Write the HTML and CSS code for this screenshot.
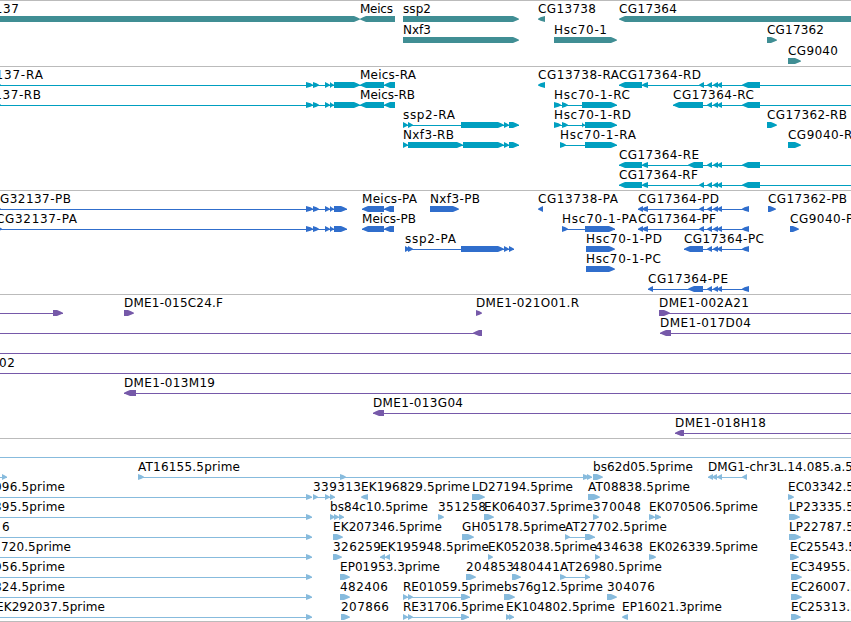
FILE: index.html
```
<!DOCTYPE html>
<html lang="en">

<head>
    <meta charset="UTF-8">
    <title>Genome Tracks</title>
    <meta name="viewport" content="width=device-width, initial-scale=1.0">
    <link rel="stylesheet" href="styles.css">
</head>

<body>

    <main class="tracks">
        <svg class="track genes" id="genes"></svg>
        <svg class="track transcripts" id="transcripts"></svg>
        <svg class="track proteins" id="proteins"></svg>
        <svg class="track bacs" id="bacs"></svg>
        <svg class="track ests" id="ests"></svg>
    </main>

    <script src="script.js"></script>

</body>

</html>
```
FILE: styles.css
```
body {
    margin: 0;
    background: #fff;
    overflow: hidden;
}

.tracks {
    display: flex;
    flex-direction: column;
    border-bottom: 1px solid #bbb;
}

.track {
    display: block;
    box-sizing: border-box;
    width: 100%;
    border-top: 1px solid #bbb;
    overflow: hidden;
}

.genes {
    height: 66px;
    fill: #408e94;
}

.transcripts {
    height: 124px;
    fill: #009fc0;
}

.proteins {
    height: 104px;
    fill: #306ecc;
}

.bacs {
    height: 144px;
    fill: #7659a9;
}

.ests {
    height: 183px;
    fill: #87bbdd;
}

.label {
    font-family: "DejaVu Sans", sans-serif;
    font-size: 12px;
    fill: #000;
}
```
FILE: script.js
```
const SVG_NS = 'http://www.w3.org/2000/svg';

// runs past the right edge of the view
const OUT = 900;

// exons shared by several CG17364 and Meics/CG32137 models
const tail = [[707, 712], [713, 718], [717, 722]];
const left = [[306, 313], [313, 319], [325, 330], [330, 334]];

// feature: [row, strand, label, label start, label end, blocks, line start, line end]
const tracks = {
    genes: {
        first: 18, step: 21,
        features: [
            [0, '+', 'CG32137', -41, 19, [[-40, 360]]],
            [0, '-', 'Meics', 360, 393, [[360, 395]]],
            [0, '+', 'ssp2', 403, 431, [[403, 519]]],
            [1, '+', 'Nxf3', 403, 431, [[403, 519]]],
            [0, '-', 'CG13738', 538, 596, [[538, 545]]],
            [1, '+', 'Hsc70-1', 554, 607, [[554, 617]]],
            [0, '-', 'CG17364', 619, 677, [[619, OUT]]],
            [1, '+', 'CG17362', 767, 824, [[767, 777]]],
            [2, '+', 'CG9040', 788, 838, [[788, 801]]]
        ]
    },
    transcripts: {
        first: 18, step: 20,
        features: [
            [0, '+', 'CG32137-RA', -41, 43, [[-20, 1], ...left, [334, 360]]],
            [1, '+', 'CG32137-RB', -41, 41, [[-20, 1], ...left, [334, 360]]],
            [0, '-', 'Meics-RA', 360, 416, [[360, 384], [384, 395]]],
            [1, '-', 'Meics-RB', 360, 415, [[360, 384], [384, 395]]],
            [2, '+', 'ssp2-RA', 403, 455, [[403, 408], [408, 413], [461, 504], [504, 509], [509, 519]]],
            [3, '+', 'Nxf3-RB', 403, 454, [[403, 408], [408, 463], [463, 504], [504, 509], [509, 519]]],
            [0, '-', 'CG13738-RA', 538, 619, [[538, 545]]],
            [1, '+', 'Hsc70-1-RC', 554, 630, [[554, 561], [562, 568], [582, 617]]],
            [2, '+', 'Hsc70-1-RD', 554, 631, [[554, 561], [562, 568], [582, 585], [585, 617]]],
            [3, '+', 'Hsc70-1-RA', 560, 636, [[560, 566], [585, 617]]],
            [0, '-', 'CG17364-RD', 619, 701, [[619, 642], [642, 648], [699, 704], ...tail, [742, 760]], 619, OUT],
            [1, '-', 'CG17364-RC', 673, 754, [[673, 703], ...tail, [742, 760]], 673, OUT],
            [4, '-', 'CG17364-RE', 619, 699, [[619, 642], [642, 648], [688, 703], ...tail, [742, 760]], 619, OUT],
            [5, '-', 'CG17364-RF', 619, 698, [[619, 642], [642, 648], [699, 704], ...tail, [742, 760]], 619, OUT],
            [2, '+', 'CG17362-RB', 767, 847, [[767, 777]]],
            [3, '+', 'CG9040-RB', 788, 861, [[788, 801]]]
        ]
    },
    proteins: {
        first: 18, step: 20,
        features: [
            [0, '+', 'CG32137-PB', -9, 71, [[-9, 1], ...left, [334, 347]], -40, 347],
            [1, '+', 'CG32137-PA', -4, 77, [[-4, 2], ...left, [334, 347]], -40, 347],
            [0, '-', 'Meics-PA', 362, 417, [[362, 384], [384, 394]]],
            [1, '-', 'Meics-PB', 362, 416, [[362, 384], [384, 394]]],
            [0, '+', 'Nxf3-PB', 430, 480, [[430, 459]]],
            [2, '+', 'ssp2-PA', 405, 456, [[405, 410], [408, 413], [461, 504], [504, 509], [509, 514]]],
            [0, '-', 'CG13738-PA', 538, 618, [[538, 543]]],
            [1, '+', 'Hsc70-1-PA', 562, 637, [[562, 568], [585, 615]]],
            [2, '+', 'Hsc70-1-PD', 586, 662, [[586, 615]]],
            [3, '+', 'Hsc70-1-PC', 586, 661, [[586, 615]]],
            [0, '-', 'CG17364-PD', 638, 719, [[638, 643], [642, 648], [699, 704], ...tail, [742, 749]]],
            [1, '-', 'CG17364-PF', 638, 716, [[638, 643], [642, 648], [699, 704], ...tail, [742, 749]]],
            [2, '-', 'CG17364-PC', 684, 764, [[684, 703], ...tail, [742, 749]]],
            [4, '-', 'CG17364-PE', 648, 728, [[648, 653], [688, 703], ...tail, [742, 749]]],
            [0, '+', 'CG17362-PB', 768, 847, [[768, 776]]],
            [1, '+', 'CG9040-PB', 790, 862, [[790, 799]]]
        ]
    },
    bacs: {
        first: 18, step: 20,
        features: [
            [0, '+', '', 0, 0, [[53, 63]], -40, 63],
            [0, '+', 'DME1-015C24.F', 124, 223, [[124, 134]]],
            [0, '+', 'DME1-021O01.R', 476, 579, [[476, 482]]],
            [0, '+', 'DME1-002A21', 659, 749, [[659, 670]], 659, OUT],
            [1, '-', '', 0, 0, [[473, 482]], -40, 482],
            [1, '-', 'DME1-017D04', 660, 751, [[660, 671]], 660, OUT],
            [2, '-', '', 0, 0, [], -40, OUT],
            [3, '-', '02', -1, 15, [], -40, OUT],
            [4, '-', 'DME1-013M19', 124, 215, [[124, 136]], 124, OUT],
            [5, '-', 'DME1-013G04', 373, 463, [[373, 384]], 373, OUT],
            [6, '-', 'DME1-018H18', 675, 766, [[675, 684]], 675, OUT]
        ]
    },
    ests: {
        first: 18, step: 20,
        features: [
            [0, '+', '', 0, 0, [], -40, OUT],
            [1, '+', '', 0, 0, [[2, 7]], -40, 7],
            [1, '+', 'AT16155.5prime', 138, 240, [[138, 144], [340, 346], [583, 589], [587, 592]]],
            [1, '+', 'bs62d05.5prime', 593, 693, [[593, 603]]],
            [1, '-', 'DMG1-chr3L.14.085.a.5', 708, 853, [[708, 713], [712, 717], [717, 722], [742, 747]]],

            [2, '+', '096.5prime', -6, 65, [[306, 312]], -40, 312],
            [2, '+', '339313', 313, 361, [[313, 318], [325, 330], [330, 335]]],
            [2, '-', 'EK196829.5prime', 361, 470, [[361, 368]]],
            [2, '+', 'LD27194.5prime', 472, 573, [[472, 485]]],
            [2, '+', 'AT08838.5prime', 588, 690, [[588, 600]]],
            [2, '+', 'EC03342.5', 788, 854, [[788, 794]]],

            [3, '+', '395.5prime', -6, 65, [[306, 312]], -40, 312],
            [3, '+', 'bs84c10.5prime', 330, 428, [[330, 335], [334, 339], [339, 344]]],
            [3, '+', '351258', 438, 486, [[438, 444]]],
            [3, '+', 'EK064037.5prime', 484, 593, [[484, 494]]],
            [3, '+', '370048', 593, 641, [[593, 599]]],
            [3, '+', 'EK070506.5prime', 649, 758, [[649, 655], [655, 661]]],
            [3, '+', 'LP23335.5', 789, 854, [[789, 800]]],

            [4, '+', '6', 2, 10, [[306, 312]], -40, 312],
            [4, '+', 'EK207346.5prime', 333, 442, [[333, 343]]],
            [4, '+', 'GH05178.5prime', 462, 566, [[462, 474]]],
            [4, '+', 'AT27702.5prime', 565, 667, [[565, 570], [585, 595]]],
            [4, '+', 'LP22787.5', 789, 854, [[789, 801]]],

            [5, '+', '720.5prime', 1, 71, [[306, 312]], -40, 312],
            [5, '+', '326259', 333, 381, [[333, 342]]],
            [5, '-', 'EK195948.5prime', 380, 489, [[380, 385], [385, 390]]],
            [5, '+', 'EK052038.5prime', 488, 597, [[488, 493]]],
            [5, '+', '434638', 595, 643, [[595, 600]]],
            [5, '+', 'EK026339.5prime', 649, 758, [[649, 656]]],
            [5, '+', 'EC25543.5', 790, 856, [[790, 799]]],

            [6, '+', '956.5prime', -6, 65, [[306, 312]], -40, 312],
            [6, '+', 'EP01953.3prime', 340, 440, [[340, 350]]],
            [6, '+', '204853', 466, 514, [[466, 476]]],
            [6, '+', '480441', 512, 560, [[512, 521]]],
            [6, '+', 'AT26980.5prime', 560, 662, [[560, 566], [585, 590]]],
            [6, '+', 'EC34955.5', 791, 858, [[791, 802]]],

            [7, '+', '824.5prime', -6, 65, [[306, 312]], -40, 312],
            [7, '+', '482406', 340, 388, [[340, 350]]],
            [7, '+', 'RE01059.5prime', 403, 504, [[403, 408], [408, 413], [461, 470]]],
            [7, '+', 'bs76g12.5prime', 504, 603, [[504, 515]]],
            [7, '+', '304076', 607, 655, [[607, 617]]],
            [7, '+', 'EC26007.5', 791, 858, [[791, 802]]],

            [8, '+', 'EK292037.5prime', -4, 105, [[306, 312]], -40, 312],
            [8, '+', '207866', 341, 389, [[341, 350]]],
            [8, '+', 'RE31706.5prime', 403, 504, [[403, 408], [408, 413], [461, 469]]],
            [8, '+', 'EK104802.5prime', 506, 615, [[506, 511], [509, 514]]],
            [8, '-', 'EP16021.3prime', 622, 722, [[622, 628]]],
            [8, '+', 'EC25313.5', 791, 858, [[791, 801]]]
        ]
    }
};

function add(svg, name, attrs) {
    const node = document.createElementNS(SVG_NS, name);
    Object.entries(attrs).forEach(([key, value]) => node.setAttribute(key, value));
    svg.appendChild(node);
    return node;
}

// flat at the back, tapered towards the strand direction
function blockPoints(x1, x2, y, strand) {
    const head = strand === '+' ? x2 : x1;
    const back = strand === '+' ? x1 : x2;
    const d = strand === '+' ? -1 : 1;
    const small = x2 - x1 < 8;
    const neck = small ? back : head + 6 * d;
    const mid = head + (small ? 2.5 : 3) * d;
    const h = 1.7;
    return [
        [back, y - 3], [neck, y - 3], [mid, y - h], [head, y - 0.3], [head, y + 0.5],
        [mid, y + h], [neck, y + 3], [back, y + 3]
    ].map(p => p.join(',')).join(' ');
}

Object.entries(tracks).forEach(([id, track]) => {
    const svg = document.getElementById(id);

    track.features.forEach(([row, strand, label, labelStart, labelEnd, blocks, from, to]) => {
        const y = track.first + row * track.step;
        const start = from === undefined ? blocks[0][0] : from;
        const end = to === undefined ? blocks[blocks.length - 1][1] : to;

        // connector, kept clear of the tip where a single block has no introns
        if (blocks.length !== 1 || from !== undefined) {
            add(svg, 'rect', { x: start, y: y, width: end - start, height: 1 });
        }

        blocks.forEach(([x1, x2]) => {
            add(svg, 'polygon', { points: blockPoints(x1, x2, y, strand) });
        });

        if (label) {
            const text = add(svg, 'text', {
                class: 'label', x: labelStart, y: y - 6, textLength: labelEnd - labelStart
            });
            text.textContent = label;
        }
    });
});
```
